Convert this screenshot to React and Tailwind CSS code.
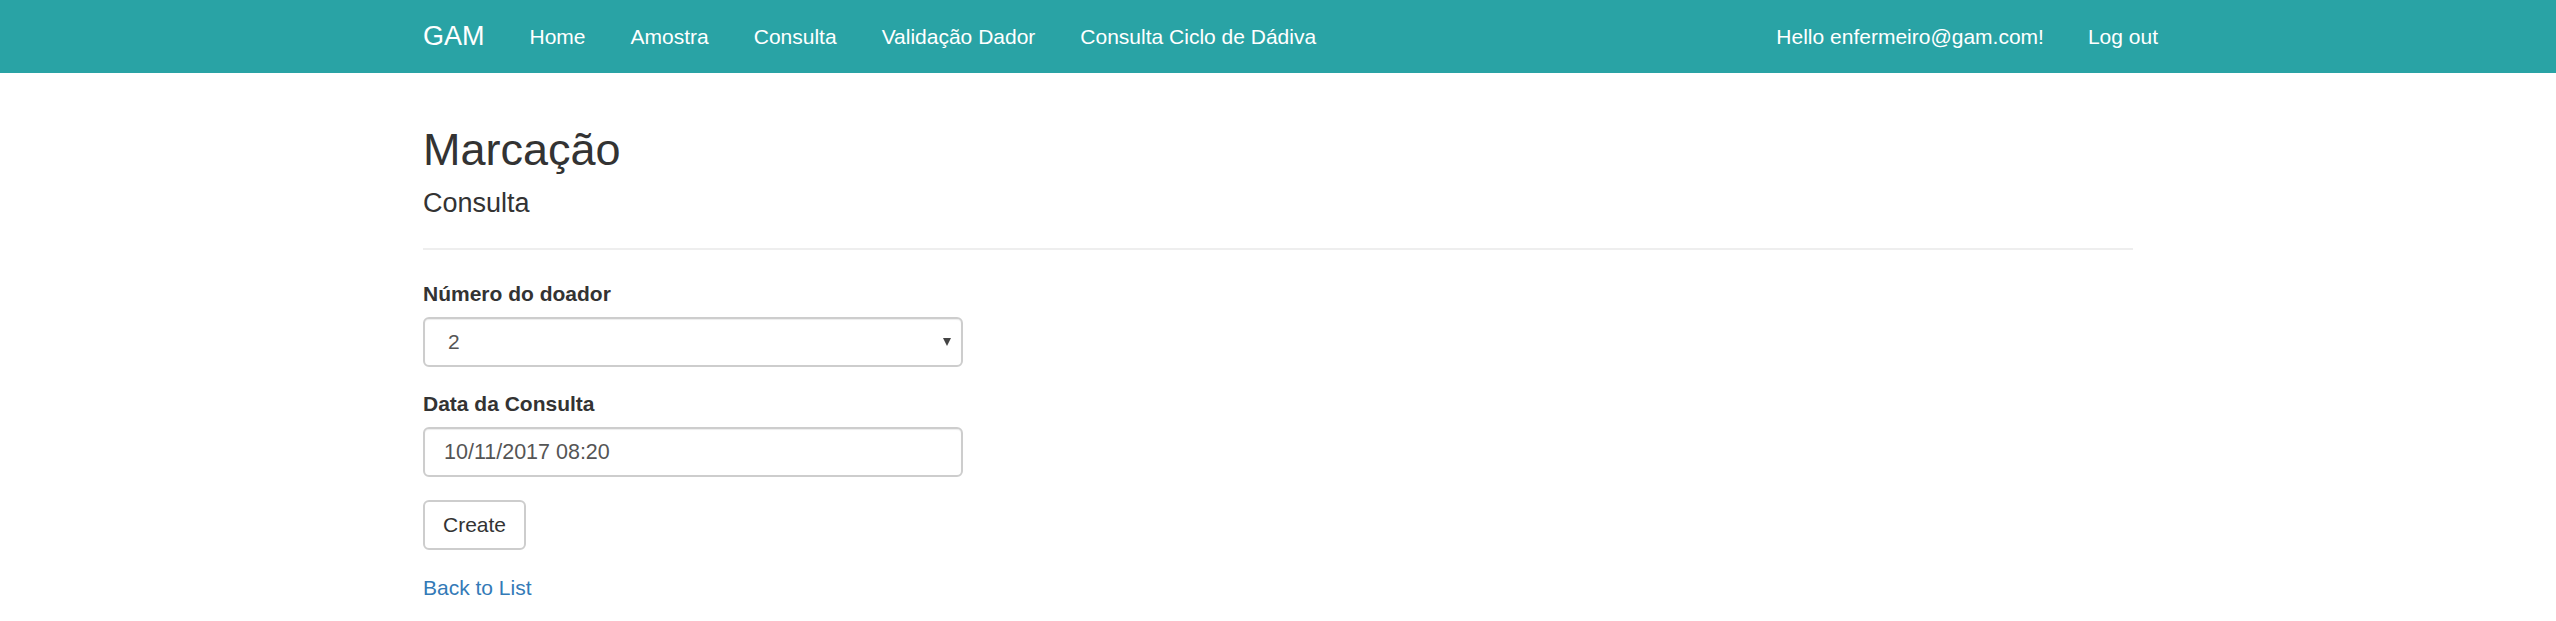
import { useState } from "react";

const navLinks = ["Home", "Amostra", "Consulta", "Validação Dador", "Consulta Ciclo de Dádiva"];

export default function App() {
    const [doador, setDoador] = useState("2");
    const [data, setData] = useState("10/11/2017 08:20");

    return (
        <div className="min-h-screen bg-white text-[#333] font-['Liberation_Sans',Arial,sans-serif]">
            {/* Navbar */}
            <nav className="h-[73px] bg-[#29a3a5]">
                <div className="w-[1710px] mx-auto h-full flex items-center justify-between text-white">
                    <div className="flex items-center">
                        <a className="text-[27px] leading-none pr-[22.5px]">GAM</a>
                        {navLinks.map((link) => (
                            <a key={link} className="text-[21px] leading-none px-[22.5px]">
                                {link}
                            </a>
                        ))}
                    </div>
                    <div className="flex items-center gap-[44px] -mr-[25px] text-[21px] leading-none">
                        <a>Hello enfermeiro@gam.com!</a>
                        <button className="text-white">Log out</button>
                    </div>
                </div>
            </nav>

            {/* Main Content */}
            <main className="w-[1710px] mx-auto">
                <h2 className="mt-[52px] text-[45px] leading-[49.5px]">Marcação</h2>
                <h4 className="mt-[14px] text-[27px] leading-[29.7px]">Consulta</h4>
                <hr className="mt-[30px] border-0 h-[2px] bg-[#eeeeee]" />

                <form className="w-[540px] mt-[29px]" onSubmit={(e) => e.preventDefault()}>
                    <div className="mb-[22px]">
                        <label className="block text-[21px] leading-[30px] font-bold mb-[8px]">Número do doador</label>
                        <div className="relative">
                            <select
                                value={doador}
                                onChange={(e) => setDoador(e.target.value)}
                                className="w-full h-[50px] appearance-none rounded-[6px] border-2 border-[#cdcdcd] bg-white pl-[23px] text-[21px] text-[#555] shadow-[inset_0_1px_1px_rgba(0,0,0,0.075)] outline-none"
                            >
                                <option value="1">1</option>
                                <option value="2">2</option>
                                <option value="3">3</option>
                            </select>
                            <span className="pointer-events-none absolute right-[12px] top-[21px] w-0 h-0 border-l-[4px] border-r-[4px] border-t-[8px] border-l-transparent border-r-transparent border-t-[#444]" />
                        </div>
                    </div>

                    <div className="mb-[23px]">
                        <label className="block text-[21px] leading-[30px] font-bold mb-[8px]">Data da Consulta</label>
                        <input
                            value={data}
                            onChange={(e) => setData(e.target.value)}
                            className="w-full h-[50px] rounded-[6px] border-2 border-[#cdcdcd] bg-white px-[19px] text-[21.5px] text-[#555] shadow-[inset_0_1px_1px_rgba(0,0,0,0.075)] outline-none"
                        />
                    </div>

                    <button
                        type="submit"
                        className="h-[50px] px-[18px] rounded-[6px] border-2 border-[#cdcdcd] bg-white text-[21px] text-[#333]"
                    >
                        Create
                    </button>
                </form>

                <div className="mt-[23px]">
                    <a className="text-[21px] leading-[30px] text-[#337ab7]">Back to List</a>
                </div>
            </main>
        </div>
    );
}
